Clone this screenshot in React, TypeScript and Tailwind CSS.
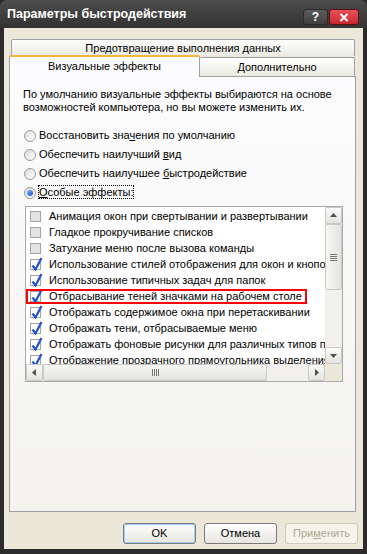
import React from "react";

const rows = [
    { label: "Анимация окон при свертывании и развертывании", on: false },
    { label: "Гладкое прокручивание списков", on: false },
    { label: "Затухание меню после вызова команды", on: false },
    { label: "Использование стилей отображения для окон и кнопок", on: true },
    { label: "Использование типичных задач для папок", on: true },
    { label: "Отбрасывание теней значками на рабочем столе", on: true },
    { label: "Отображать содержимое окна при перетаскивании", on: true },
    { label: "Отображать тени, отбрасываемые меню", on: true },
    { label: "Отображать фоновые рисунки для различных типов папок", on: true },
    { label: "Отображение прозрачного прямоугольника выделения", on: true },
];

function Radio({ checked, children }: { checked?: boolean; children: React.ReactNode }) {
    return (
        <div className="flex items-center h-[19px]">
            <div className="shrink-0 ml-[1px] w-[12px] h-[12px] rounded-full border border-[#9a9a9a] bg-gradient-to-br from-[#dcdcd8] to-[#ffffff] flex items-center justify-center">
                {checked && <div className="w-[6px] h-[6px] rounded-full bg-gradient-to-br from-[#7fb2ff] to-[#1c4fd0]" />}
            </div>
            <div className="ml-[3px]">{children}</div>
        </div>
    );
}

function Check({ on }: { on: boolean }) {
    return (
        <div className={"relative shrink-0 w-[11px] h-[11px] border border-[#a3a3a3] " + (on ? "bg-white" : "bg-[#e2e2de]")}>
            {on && (
                <svg className="absolute left-[0px] top-[-3px]" width="12" height="14" viewBox="0 0 12 14">
                    <path d="M1.5 8.5 L4.5 12.5 L10.5 1" fill="none" stroke="#1f53d6" strokeWidth="2.2" />
                </svg>
            )}
        </div>
    );
}

function ArrowBtn({ dir }: { dir: "up" | "down" | "left" | "right" }) {
    const pts = {
        up: "2,7 9,7 5.5,3",
        down: "2,4 9,4 5.5,8",
        left: "7,2 7,9 3,5.5",
        right: "4,2 4,9 8,5.5",
    }[dir];
    return (
        <div className="shrink-0 w-[17px] h-[17px] rounded-[2px] border border-[#c9c9c6] bg-gradient-to-b from-[#fbfbfa] to-[#e3e3df] flex items-center justify-center">
            <svg width="11" height="11" viewBox="0 0 11 11">
                <polygon points={pts} fill="#4d4d4d" />
            </svg>
        </div>
    );
}

export default function App() {
    return (
        <div className="w-[367px] h-[554px] bg-[#2b2b2b] flex flex-col" style={{ fontFamily: '"Liberation Sans", Arial, sans-serif' }}>
            {/* title bar */}
            <div className="h-[28px] flex items-center rounded-t-[7px] bg-gradient-to-b from-[#4d4d4d] to-[#323232] pl-[7px] pr-[8px]">
                <span className="text-white font-bold text-[12.5px]">Параметры быстродействия</span>
                <div className="ml-auto flex gap-[1px] mt-[6px]">
                    <div className="w-[25px] h-[16px] rounded-[3px] border border-[#2a2a2a] bg-gradient-to-b from-[#5d5d5d] to-[#3f3f3f] flex items-center justify-center text-white font-bold text-[12px]">?</div>
                    <div className="w-[30px] h-[16px] rounded-[3px] border border-[#5a1010] bg-gradient-to-b from-[#e8525a] to-[#c5242c] flex items-center justify-center">
                        <svg width="10" height="9" viewBox="0 0 10 9">
                            <path d="M1.5 1 L8.5 8 M8.5 1 L1.5 8" stroke="white" strokeWidth="2" />
                        </svg>
                    </div>
                </div>
            </div>

            {/* body */}
            <div className="flex-1 mx-[4px] mb-[5px] bg-[#ebe8da] flex flex-col text-[11px] text-black">
                <div className="pt-[11px] pl-[5px]">
                    {/* tabs */}
                    <div className="ml-[2px] w-[344px] h-[17px] border border-b-0 border-[#9ba1a4] rounded-t-[2px] bg-gradient-to-b from-[#fefefe] to-[#ebeae2] flex items-center justify-center">
                        Предотвращение выполнения данных
                    </div>
                    <div className="flex items-end h-[20px]">
                        <div className="relative z-10 -mb-[1px] w-[191px] h-[22px] border border-b-0 border-[#9ba1a4] border-t-2 border-t-[#f5b640] rounded-t-[2px] bg-[#fcfcfe] flex items-center justify-center pb-[1px]">
                            Визуальные эффекты
                        </div>
                        <div className="w-[155px] h-[19px] border border-b-0 border-l-0 border-[#9ba1a4] rounded-t-[2px] bg-gradient-to-b from-[#fefefe] to-[#ebeae2] flex items-center justify-center">
                            Дополнительно
                        </div>
                    </div>

                    {/* panel */}
                    <div className="w-[347px] h-[436px] border border-[#9ba1a4] bg-gradient-to-b from-[#fcfcfe] to-[#f4f3ee] pl-[13px] pt-[11px]">
                        <p className="leading-[13px] whitespace-nowrap">
                            По умолчанию визуальные эффекты выбираются на основе
                            <br />
                            возможностей компьютера, но вы можете изменить их.
                        </p>
                        <div className="mt-[12px]">
                            <Radio>
                                Восстановить зна<span className="underline">ч</span>ения по умолчанию
                            </Radio>
                            <Radio>
                                Обеспечить наилучший <span className="underline">в</span>ид
                            </Radio>
                            <Radio>
                                Обеспечить наилучшее <span className="underline">б</span>ыстродействие
                            </Radio>
                            <Radio checked>
                                <span className="outline outline-1 outline-dotted outline-black">
                                    <span className="underline">О</span>собые эффекты:
                                </span>
                            </Radio>
                        </div>

                        {/* list */}
                        <div className="mt-[4px] ml-[2px] w-[318px] h-[176px] border border-[#a6abb3] bg-white grid grid-cols-[299px_17px] grid-rows-[157px_17px]">
                            <div className="relative overflow-hidden pt-[1px]">
                                {rows.map((r) => (
                                    <div key={r.label} className="h-[16px] flex items-center pl-[4px] whitespace-nowrap">
                                        <Check on={r.on} />
                                        <span className="ml-[8px]">{r.label}</span>
                                    </div>
                                ))}
                                <div className="absolute left-0 top-[82px] w-[281px] h-[15px] border-2 border-[#ff0000]" />
                            </div>
                            {/* vertical scrollbar */}
                            <div className="flex flex-col bg-[#f1f0ec]">
                                <ArrowBtn dir="up" />
                                <div className="h-[66px] rounded-[2px] border border-[#c9c9c6] bg-gradient-to-r from-[#f7f7f5] to-[#e4e3df] flex items-center justify-center">
                                    <div className="flex flex-col gap-[1px]">
                                        <div className="w-[7px] h-[1px] bg-[#777]" />
                                        <div className="w-[7px] h-[1px] bg-[#777]" />
                                        <div className="w-[7px] h-[1px] bg-[#777]" />
                                        <div className="w-[7px] h-[1px] bg-[#777]" />
                                    </div>
                                </div>
                                <div className="flex-1" />
                                <ArrowBtn dir="down" />
                            </div>
                            {/* horizontal scrollbar */}
                            <div className="flex bg-[#f1f0ec]">
                                <ArrowBtn dir="left" />
                                <div className="w-[224px] rounded-[2px] border border-[#c9c9c6] bg-gradient-to-b from-[#f7f7f5] to-[#e4e3df] flex items-center justify-center">
                                    <div className="flex gap-[1px]">
                                        <div className="w-[1px] h-[7px] bg-[#777]" />
                                        <div className="w-[1px] h-[7px] bg-[#777]" />
                                        <div className="w-[1px] h-[7px] bg-[#777]" />
                                        <div className="w-[1px] h-[7px] bg-[#777]" />
                                    </div>
                                </div>
                                <div className="flex-1" />
                                <ArrowBtn dir="right" />
                            </div>
                            <div className="bg-[#ebe8da]" />
                        </div>
                    </div>
                </div>

                {/* buttons */}
                <div className="mt-[11px] flex justify-end gap-[8px] pr-[5px]">
                    <button className="w-[73px] h-[21px] rounded-[3px] border border-[#7a7a7a] bg-gradient-to-b from-[#ffffff] to-[#e6e5df] shadow-[inset_0_0_0_1px_#9fd0ff] text-[11px]">
                        OK
                    </button>
                    <button className="w-[73px] h-[21px] rounded-[3px] border border-[#7a7a7a] bg-gradient-to-b from-[#ffffff] to-[#e6e5df] text-[11px]">
                        Отмена
                    </button>
                    <button className="w-[73px] h-[21px] rounded-[3px] border border-[#cbc8bc] bg-[#f5f4ea] text-[#aca899] text-[11px]">
                        При<span className="underline">м</span>енить
                    </button>
                </div>
            </div>
        </div>
    );
}
